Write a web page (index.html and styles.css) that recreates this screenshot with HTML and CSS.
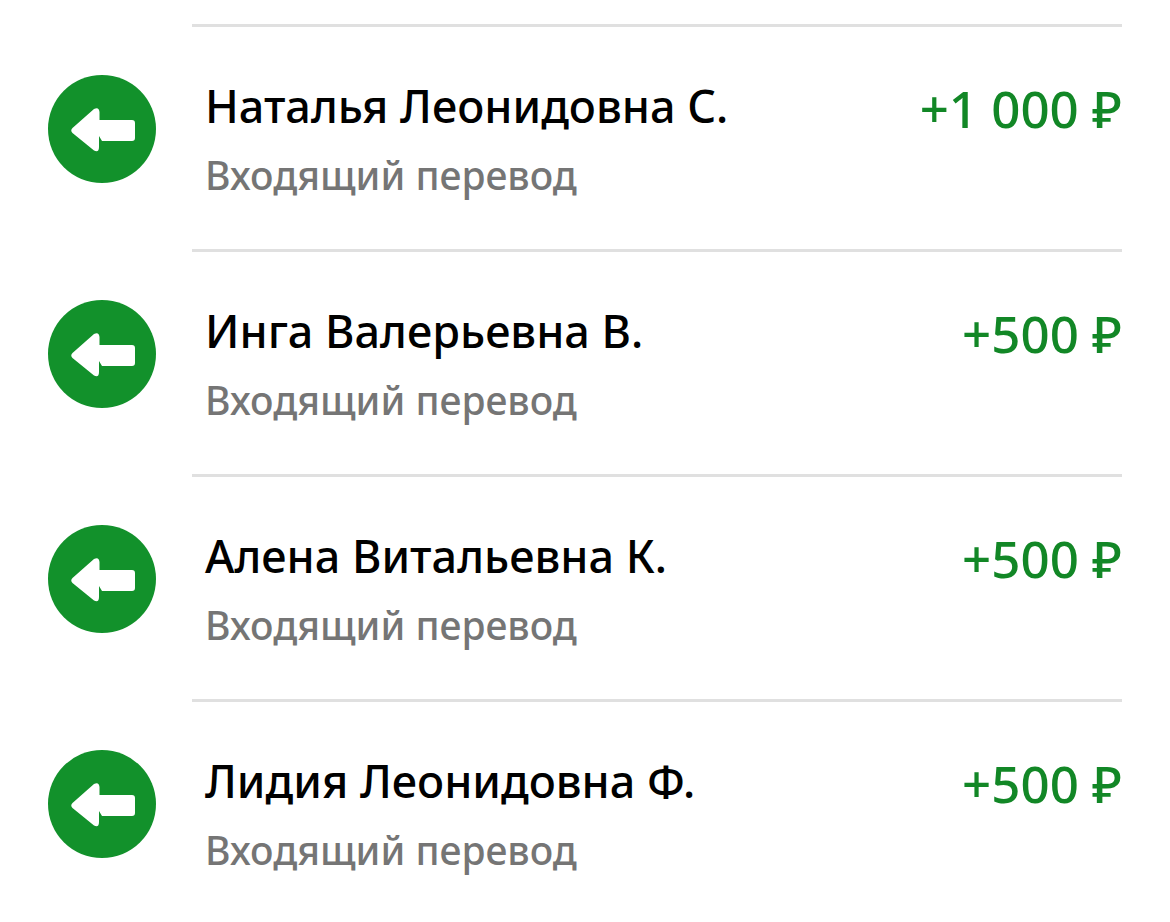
FILE: index.html
```html
<!DOCTYPE html>
<html lang="ru">
<head>
  <meta charset="UTF-8">
  <meta name="viewport" content="width=device-width, initial-scale=1">
  <title>История операций</title>
  <link rel="stylesheet" href="styles.css">
</head>
<body>

  <svg class="sprite" aria-hidden="true">
    <symbol id="arrow" viewBox="0 0 108 108">
      <path d="M24.500 53 L46 34 Q51 31.500 51.500 37 V45 H84 Q87 45 87 48 V63 Q87 66 84 66 H54 L51 61 V72 Q51 78 46 75.500 L24.500 58 Q22 55.500 24.500 53 Z"/>
    </symbol>
  </svg>

  <ul class="history">
    <li class="operation">
      <svg class="icon"><use href="#arrow"/></svg>
      <div class="details">
        <div class="info">
          <div class="name">Наталья Леонидовна С.</div>
          <div class="type">Входящий перевод</div>
        </div>
        <div class="amount">+1 000 ₽</div>
      </div>
    </li>
    <li class="operation">
      <svg class="icon"><use href="#arrow"/></svg>
      <div class="details">
        <div class="info">
          <div class="name">Инга Валерьевна В.</div>
          <div class="type">Входящий перевод</div>
        </div>
        <div class="amount">+500 ₽</div>
      </div>
    </li>
    <li class="operation">
      <svg class="icon"><use href="#arrow"/></svg>
      <div class="details">
        <div class="info">
          <div class="name">Алена Витальевна К.</div>
          <div class="type">Входящий перевод</div>
        </div>
        <div class="amount">+500 ₽</div>
      </div>
    </li>
    <li class="operation">
      <svg class="icon"><use href="#arrow"/></svg>
      <div class="details">
        <div class="info">
          <div class="name">Лидия Леонидовна Ф.</div>
          <div class="type">Входящий перевод</div>
        </div>
        <div class="amount">+500 ₽</div>
      </div>
    </li>
  </ul>

</body>
</html>
```
FILE: styles.css
```css
body {
  margin: 0;
  background: #fff;
  font-family: "Noto Sans", "Open Sans", sans-serif;
  font-weight: 500;
}
.sprite {
  display: none;
}
.history {
  list-style: none;
  margin: 0;
  padding: 24px 48px 0;
}
.operation {
  display: flex;
  gap: 36px;
}
.icon {
  flex: none;
  width: 108px;
  height: 108px;
  margin-top: 51px;
  border-radius: 50%;
  background: #12912b;
  fill: #fff;
}
.details {
  flex: 1;
  display: flex;
  justify-content: space-between;
  gap: 24px;
  box-sizing: border-box;
  min-height: 225px;
  padding: 49px 0 0 13px;
  border-top: 3px solid #e0e0e0;
}
.name {
  font-size: 45px;
  line-height: 60px;
  color: #000;
}
.type {
  margin-top: 12px;
  font-size: 39px;
  line-height: 54px;
  color: #757575;
}
.amount {
  font-size: 51px;
  line-height: 64px;
  color: #128726;
  white-space: nowrap;
}
```
